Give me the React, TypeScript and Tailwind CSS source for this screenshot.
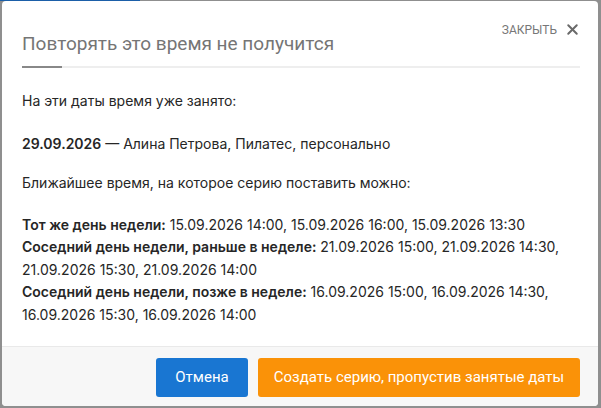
import { X } from "lucide-react";

const sameDay = "15.09.2026 14:00, 15.09.2026 16:00, 15.09.2026 13:30";
const earlier = "21.09.2026 15:00, 21.09.2026 14:30, 21.09.2026 15:30, 21.09.2026 14:00";
const later = "16.09.2026 15:00, 16.09.2026 14:30, 16.09.2026 15:30, 16.09.2026 14:00";

export default function App() {
  return (
    <div className="w-[601px] h-[408px] overflow-hidden bg-[#8f8f8f] flex flex-col">
      {/* page behind the overlay */}
      <div className="h-[1px] flex">
        <div className="w-[140px] bg-[#1b5fa8]" />
      </div>

      <div className="ml-[2px] w-[596px] h-[405px] bg-white rounded-[4px] flex flex-col overflow-hidden">
        {/* header */}
        <div className="pl-[20px] pr-[18px] pt-[20px]">
          <div className="flex justify-between items-start">
            <h2 className="mt-[11px] text-[19px] leading-[24px] text-[#757575] font-['Roboto',sans-serif]">
              Повторять это время не получится
            </h2>
            <button className="flex items-center gap-[7px] -mr-[1px] text-[12px] leading-[14px] uppercase text-[#777] font-['Roboto',sans-serif]">
              <span>Закрыть</span>
              <X size={17} strokeWidth={2.8} className="text-[#6a6a6a]" />
            </button>
          </div>
          <div className="mt-[10px] h-[2px] bg-[#eeeeee] flex">
            <div className="w-[40px] bg-[#888888]" />
          </div>
        </div>

        {/* body */}
        <div className="flex-1 pl-[20px] pr-[18px] pt-[22px] text-[14px] leading-[22.5px] text-[#262626] font-['Inter',sans-serif]">
          <p>На эти даты время уже занято:</p>
          <p className="mt-[20px]">
            <b className="font-semibold">29.09.2026</b> — Алина Петрова, Пилатес, персонально
          </p>
          <p className="mt-[17px]">Ближайшее время, на которое серию поставить можно:</p>
          <div className="mt-[19px]">
            <p>
              <b className="font-semibold">Тот же день недели:</b> {sameDay}
            </p>
            <p>
              <b className="font-semibold">Соседний день недели, раньше в неделе:</b> {earlier}
            </p>
            <p>
              <b className="font-semibold">Соседний день недели, позже в неделе:</b> {later}
            </p>
          </div>
        </div>

        {/* footer */}
        <div className="h-[60px] border-t border-[#e9e9e9] bg-[#f7f7f7] pr-[18px] pt-[11px] flex justify-end items-start gap-[10px] font-['Roboto',sans-serif]">
          <button className="w-[92px] h-[39px] rounded-[3px] bg-[#1976d2] text-white text-[15px]">
            Отмена
          </button>
          <button className="w-[322px] h-[39px] rounded-[3px] bg-[#fa9208] text-white text-[15px]">
            Создать серию, пропустив занятые даты
          </button>
        </div>
      </div>
    </div>
  );
}
